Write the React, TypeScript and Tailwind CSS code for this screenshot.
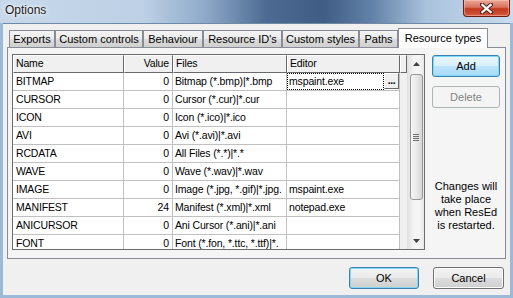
import React from "react";

const rows: [string, string, string, string][] = [
  ["BITMAP", "0", "Bitmap (*.bmp)|*.bmp", "mspaint.exe"],
  ["CURSOR", "0", "Cursor (*.cur)|*.cur", ""],
  ["ICON", "0", "Icon (*.ico)|*.ico", ""],
  ["AVI", "0", "Avi (*.avi)|*.avi", ""],
  ["RCDATA", "0", "All Files (*.*)|*.*", ""],
  ["WAVE", "0", "Wave (*.wav)|*.wav", ""],
  ["IMAGE", "0", "Image (*.jpg, *.gif)|*.jpg.", "mspaint.exe"],
  ["MANIFEST", "24", "Manifest (*.xml)|*.xml", "notepad.exe"],
  ["ANICURSOR", "0", "Ani Cursor (*.ani)|*.ani", ""],
  ["FONT", "0", "Font (*.fon, *.ttc, *.ttf)|*.", ""],
];

const tabs = [
  { label: "Exports", w: "w-[46px]" },
  { label: "Custom controls", w: "w-[88px]" },
  { label: "Behaviour", w: "w-[60px]" },
  { label: "Resource ID's", w: "w-[79px]" },
  { label: "Custom styles", w: "w-[77px]" },
  { label: "Paths", w: "w-[39px]" },
];

const btnNormal =
  "border border-[#707070] rounded-[3px] bg-[linear-gradient(to_bottom,#f2f2f2_0%,#ebebeb_48%,#dddddd_50%,#cfcfcf_100%)] shadow-[inset_0_0_0_1px_#fcfcfc]";
const btnHover =
  "border border-[#3c7fb1] rounded-[3px] bg-[linear-gradient(to_bottom,#eaf6fd_0%,#d9f0fc_48%,#bee6fd_50%,#a7d9f5_100%)] shadow-[inset_0_0_0_1px_#7fd9f8]";
const btnDefault =
  "border border-[#3c7fb1] rounded-[3px] bg-[linear-gradient(to_bottom,#f2f2f2_0%,#ebebeb_48%,#dddddd_50%,#cfcfcf_100%)] shadow-[inset_0_0_0_1px_#7fd9f8]";
const btnDisabled = "border border-[#adb2b5] rounded-[3px] bg-[#f4f4f4] text-[#838383]";

const headCell =
  "h-[18px] shrink-0 bg-[#f0f0f0] border-t border-l border-t-white border-l-white border-b border-r border-b-[#696969] border-r-[#696969] leading-[15px] whitespace-nowrap overflow-hidden";

const cell = "h-[18px] shrink-0 border-b border-r border-[#c0c0c0] leading-[17px] whitespace-nowrap overflow-hidden";

export default function App() {
  return (
    <div className="w-[513px] h-[298px] flex flex-col bg-[#a9c3de] font-['Liberation_Sans',Arial,sans-serif] text-[11px] text-black overflow-hidden">
      {/* title bar */}
      <div className="h-[23px] shrink-0 flex items-start bg-[linear-gradient(to_right,#c7d8ea_0%,#bdd0e5_28%,#8ea9c9_40%,#4d6b92_52%,#3f5d85_63%,#6584a9_73%,#a9c2dd_83%,#cadcee_100%)]">
        <span className="pl-[5px] pt-[2px] text-[12px] leading-[16px] text-[#1b1b1b] [text-shadow:0_0_6px_#fff,0_0_3px_#fff]">
          Options
        </span>
        <div className="ml-auto mr-[3px] w-[47px] h-[17px] rounded-b-[4px] border border-t-0 border-[#6b1d12] bg-[linear-gradient(to_bottom,#e9a999_0%,#d9725e_45%,#c2391f_55%,#d35a3e_100%)] shadow-[inset_0_0_0_1px_rgba(255,200,190,0.5)] flex items-center justify-center">
          <svg width="13" height="11" viewBox="0 0 13 11">
            <path d="M2 1.5 L11 9.5 M11 1.5 L2 9.5" stroke="#4a1a12" strokeWidth="4" strokeLinecap="square" />
            <path d="M2.3 1.8 L10.7 9.2 M10.7 1.8 L2.3 9.2" stroke="#ffffff" strokeWidth="2.2" strokeLinecap="square" />
          </svg>
        </div>
      </div>

      <div className="flex flex-1">
        <div className="w-[3px] shrink-0 bg-[#9db9d8]" />
        {/* client */}
        <div className="flex-1 flex flex-col bg-[#f0f0f0] px-[4px] pt-[4px] border-t border-[#6f8aa8]">
          {/* tabs */}
          <div className="h-[19px] flex items-end pl-[2px]">
            {tabs.map((t) => (
              <div
                key={t.label}
                className={`${t.w} h-[17px] shrink-0 border border-b-0 border-[#898c95] bg-[linear-gradient(to_bottom,#f3f3f3_0%,#ebebeb_50%,#dddddd_51%,#cfcfcf_100%)] text-center leading-[16px] whitespace-nowrap`}
              >
                {t.label}
              </div>
            ))}
            <div className="relative z-10 w-[90px] h-[20px] -mb-[1px] shrink-0 border border-b-0 border-[#898c95] bg-white text-center leading-[18px] whitespace-nowrap">
              Resource types
            </div>
          </div>

          {/* panel */}
          <div className="h-[212px] shrink-0 border border-[#898c95] bg-[#f5f5f5] flex pl-[4px] pt-[6px]">
            {/* grid */}
            <div className="w-[413px] h-[196px] shrink-0 border border-[#6d6d6d] flex bg-[#f0f0f0] text-[10.5px] tracking-[-0.15px]">
              <div className="flex-1 flex flex-col overflow-hidden">
                <div className="flex">
                  <div className={`${headCell} w-[111px] pl-[2px]`}>Name</div>
                  <div className={`${headCell} w-[49px] pr-[3px] text-right`}>Value</div>
                  <div className={`${headCell} w-[114px] pl-[2px]`}>Files</div>
                  <div className={`${headCell} w-[113px] pl-[2px]`}>Editor</div>
                  <div className={`${headCell} flex-1`} />
                </div>
                {rows.map((r, i) => (
                  <div key={r[0]} className="flex">
                    <div className={`${cell} w-[111px] pl-[3px] bg-white`}>{r[0]}</div>
                    <div className={`${cell} w-[49px] pr-[3px] text-right bg-white`}>{r[1]}</div>
                    <div className={`${cell} w-[114px] pl-[2px] bg-white`}>{r[2]}</div>
                    {i === 0 ? (
                      <div className={`${cell} w-[113px] bg-white flex`}>
                        <div className="flex-1 border border-dotted border-black pl-[1px] leading-[15px]">{r[3]}</div>
                        <div className="w-[15px] h-[16px] shrink-0 bg-[#f0f0f0] border border-t-white border-l-white border-b-[#696969] border-r-[#696969] text-center font-bold leading-[12px] tracking-[-0.5px]">
                          ...
                        </div>
                      </div>
                    ) : (
                      <div className={`${cell} w-[113px] pl-[2px] bg-white`}>{r[3]}</div>
                    )}
                  </div>
                ))}
              </div>
              {/* scrollbar */}
              <div className="w-[17px] shrink-0 flex flex-col bg-[linear-gradient(to_right,#e3e3e3_0%,#f5f5f5_40%,#f5f5f5_70%,#e8e8e8_100%)] border-l border-[#e0e0e0]">
                <div className="h-[17px] flex items-center justify-center">
                  <svg width="7" height="4" viewBox="0 0 7 4">
                    <path d="M0 4 L3.5 0 L7 4 Z" fill="#404040" />
                  </svg>
                </div>
                <div className="mt-[2px] mx-auto w-[13px] h-[126px] rounded-[3px] border border-[#979797] bg-[linear-gradient(to_right,#f6f6f6_0%,#e9e9e9_50%,#d6d6d6_100%)] flex flex-col items-center justify-center gap-[1px]">
                  <div className="w-[6px] h-[1px] bg-[#707070]" />
                  <div className="w-[6px] h-[1px] bg-[#707070]" />
                  <div className="w-[6px] h-[1px] bg-[#707070]" />
                  <div className="w-[6px] h-[1px] bg-[#707070]" />
                </div>
                <div className="flex-1" />
                <div className="h-[17px] flex items-center justify-center">
                  <svg width="7" height="4" viewBox="0 0 7 4">
                    <path d="M0 0 L3.5 4 L7 0 Z" fill="#404040" />
                  </svg>
                </div>
              </div>
            </div>

            {/* right column */}
            <div className="flex-1 flex flex-col items-center pl-[2px]">
              <div className={`${btnHover} w-[68px] h-[22px] mt-[1px] flex items-center justify-center`}>Add</div>
              <div className={`${btnDisabled} w-[68px] h-[22px] mt-[9px] flex items-center justify-center`}>Delete</div>
              <div className="mt-[72px] text-center leading-[13px]">
                Changes will
                <br />
                take place
                <br />
                when ResEd
                <br />
                is restarted.
              </div>
            </div>
          </div>

          {/* bottom buttons */}
          <div className="mt-[8px] flex justify-end gap-[14px] pr-[2px]">
            <div className={`${btnDefault} w-[70px] h-[22px] flex items-center justify-center`}>OK</div>
            <div className={`${btnNormal} w-[71px] h-[22px] flex items-center justify-center`}>Cancel</div>
          </div>
        </div>
        <div className="w-[3px] shrink-0 bg-[#9db9d8]" />
      </div>
      <div className="h-[3px] shrink-0 bg-[#9db9d8]" />
    </div>
  );
}
